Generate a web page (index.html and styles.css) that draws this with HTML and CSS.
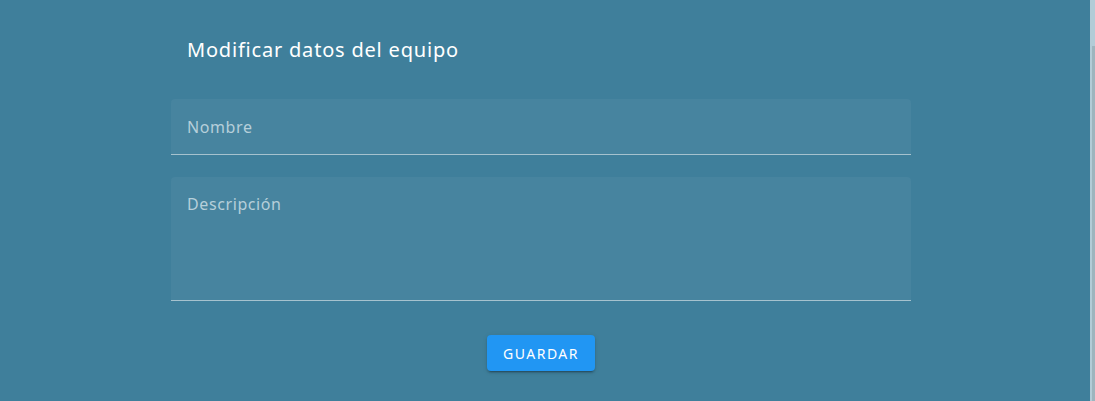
FILE: index.html
```html
<!DOCTYPE html>
<html lang="es">
<head>
<meta charset="utf-8">
<link rel="stylesheet" href="styles.css">
</head>
<body>
<div class="page">
  <form class="form">
    <h2 class="title">Modificar datos del equipo</h2>
    <div class="field field-text">
      <label class="label">Nombre</label>
    </div>
    <div class="field field-area">
      <label class="label">Descripción</label>
    </div>
    <div class="actions">
      <button type="button" class="btn">GUARDAR</button>
    </div>
  </form>
</div>
<div class="scrollbar"><div class="thumb"></div></div>
</body>
</html>
```
FILE: styles.css
```css
html, body {
  margin: 0;
  padding: 0;
  height: 100%;
  background: #3f7f9b;
  overflow: hidden;
}
body {
  font-family: "Noto Sans", "Open Sans", sans-serif;
  color: #ffffff;
}
.page {
  padding-left: 171px;
  padding-top: 34px;
}
.form {
  width: 740px;
  display: flex;
  flex-direction: column;
}
.title {
  margin: 0;
  padding: 0 16px;
  font-size: 20px;
  font-weight: 400;
  line-height: 32px;
  letter-spacing: 0.8px;
  color: #ffffff;
}
.field {
  background: #47849f;
  border-radius: 4px 4px 0 0;
  border-bottom: 1px solid #a6c2ce;
  box-sizing: border-box;
  padding: 0 16px;
}
.field-text {
  margin-top: 33px;
  height: 56px;
  padding-top: 17px;
}
.field-area {
  margin-top: 22px;
  height: 124px;
  padding-top: 16px;
}
.label {
  display: block;
  font-size: 16px;
  line-height: 22px;
  letter-spacing: 0.6px;
  color: #b6cfda;
}
.actions {
  display: flex;
  justify-content: center;
  margin-top: 34px;
}
.btn {
  width: 108px;
  height: 36px;
  border: none;
  border-radius: 4px;
  background: #2196f3;
  color: #ffffff;
  font-family: inherit;
  font-size: 14px;
  font-weight: 400;
  letter-spacing: 1.5px;
  box-shadow: 0 3px 1px -2px rgba(0,0,0,.2), 0 2px 2px 0 rgba(0,0,0,.14), 0 1px 5px 0 rgba(0,0,0,.12);
  padding: 0;
}
.scrollbar {
  position: absolute;
  top: 0;
  right: 0;
  width: 5px;
  height: 100%;
  background: #b2ccd7;
}
.thumb {
  position: absolute;
  top: 46px;
  right: 0;
  width: 3px;
  bottom: 0;
  background: #9db5be;
}
```
